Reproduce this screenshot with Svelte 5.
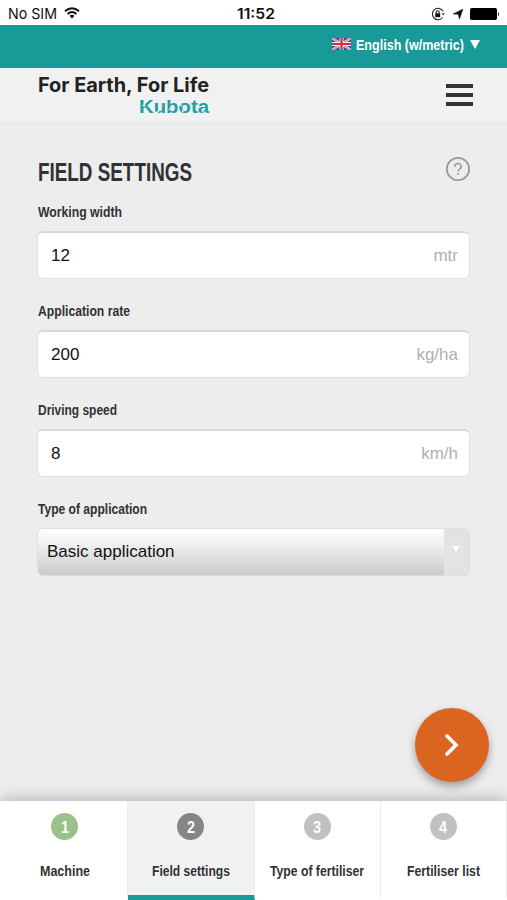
<script>
	let rows = $state([
		{ id: 'width', label: 'Working width', value: '12', unit: 'mtr', size: 84 },
		{ id: 'rate', label: 'Application rate', value: '200', unit: 'kg/ha', size: 92 },
		{ id: 'speed', label: 'Driving speed', value: '8', unit: 'km/h', size: 79 }
	]);
	let current = $state(2);

	const steps = [
		{ nr: 1, label: 'Machine', size: 50 },
		{ nr: 2, label: 'Field settings', size: 78 },
		{ nr: 3, label: 'Type of fertiliser', size: 94 },
		{ nr: 4, label: 'Fertiliser list', size: 73 }
	];

	function next() {
		if (current < steps.length) current += 1;
	}
</script>

<!-- condensed text is fitted to a fixed width -->
{#snippet narrow(text, width, size)}
	<svg class="narrow" {width} height={size + 6} aria-label={text}>
		<text x="0" y={size} font-size={size} textLength={width} lengthAdjust="spacingAndGlyphs">{text}</text>
	</svg>
{/snippet}

<div class="app">
	<div class="status">
		<div class="carrier">
			{@render narrow('No SIM', 49, 15)}
			<svg class="wifi" width="16" height="12" viewBox="0 0 16 12" fill="none" stroke="#111" stroke-width="1.9">
				<path d="M1 4.3Q8-2 15 4.3M3.5 7Q8 3 12.500 7" />
				<path d="M5.500 8.800Q8 6.800 10.500 8.800L8 11.500Z" fill="#111" stroke="none" />
			</svg>
		</div>
		<div class="clock">{@render narrow('11:52', 38, 15)}</div>
		<div class="signals">
			<svg width="14" height="14" viewBox="0 0 14 14" fill="none" stroke="#222" stroke-width="1.1">
				<path d="M12.100 4.300A5.700 5.700 0 1 0 11.600 10.500" />
				<path d="M10.700 6.300h3l-1.500 2.300z" fill="#222" stroke="none" />
				<rect x="4.200" y="6.300" width="5" height="3.900" fill="#111" stroke="none" />
				<path d="M5.200 6.500V5.200a1.500 1.500 0 0 1 3 0v1.300" />
			</svg>
			<svg width="10" height="10" viewBox="0 0 10 10"><path d="M10 0L6.500 10L5.200 5.300L0 5Z" fill="#111" stroke="#111" stroke-width=".5" /></svg>
			<svg class="battery" width="30" height="12" viewBox="0 0 30 12">
				<rect x="0" y="0" width="27" height="12" rx="1.800" fill="#000" />
				<path d="M28 4Q30 6 28 8Z" fill="#000" />
			</svg>
		</div>
	</div>

	<div class="language">
		<svg width="19" height="12" viewBox="0 0 19 12">
			<rect width="19" height="12" fill="#2f4f96" />
			<path d="M0 0L19 12M19 0L0 12" stroke="#e8e4ec" stroke-width="2.400" />
			<path d="M0 0L19 12M19 0L0 12" stroke="#d34561" stroke-width=".8" />
			<path d="M9.500 0V12M0 6H19" stroke="#f0eaf0" stroke-width="4" />
			<path d="M9.500 0V12M0 6H19" stroke="#d82745" stroke-width="2.200" />
		</svg>
		{@render narrow('English (w/metric)', 108, 15)}
		<svg width="10" height="9" viewBox="0 0 10 9"><path d="M0 0H10L5 9Z" fill="#fff" /></svg>
	</div>

	<header>
		<div class="brand">
			<div class="slogan">{@render narrow('For Earth, For Life', 171, 20)}</div>
			<svg class="logo" width="70" height="17" viewBox="0 0 70 17">
				<text x="0" y="15.500" textLength="70" lengthAdjust="spacingAndGlyphs">Kubota</text>
				<path d="M3.500 8.500H6.500M17 17L21 12M30 13L34 9M40 6L43 9M43 15L47 11M63 15L66 11" stroke="#f1f1f1" stroke-width="1.300" />
			</svg>
		</div>
		<button class="menu" aria-label="Menu"><i></i><i></i><i></i></button>
	</header>

	<main>
		<div class="title">
			<h1>{@render narrow('FIELD SETTINGS', 154, 25)}</h1>
			<svg width="26" height="26" viewBox="0 0 26 26" fill="none" stroke="#999">
				<circle cx="13" cy="13" r="11.200" stroke-width="1.700" />
				<path d="M9.800 11V10.500a3.200 3 0 1 1 4.700 2.600Q13 14 13 15.600" stroke-width="1.500" />
				<circle cx="13" cy="18" r="1" fill="#999" stroke="none" />
			</svg>
		</div>

		{#each rows as row}
			<div class="field">
				<label for={row.id}>{@render narrow(row.label, row.size, 14)}</label>
				<div class="box">
					<input id={row.id} bind:value={row.value} />
					<span>{row.unit}</span>
				</div>
			</div>
		{/each}

		<div class="field">
			<span class="label">{@render narrow('Type of application', 109, 14)}</span>
			<button class="select">
				<span>Basic application</span>
				<span class="drop">
					<svg width="10" height="10" viewBox="0 0 10 10"><path d="M1 2H9L5 9.500Z" fill="#ccc" /><path d="M1 1H9L5 8Z" fill="#fff" /></svg>
				</span>
			</button>
		</div>
	</main>

	<button class="next" onclick={next} aria-label="Next">
		<svg width="16" height="24" viewBox="0 0 16 24" fill="none" stroke="#fff" stroke-width="3.700"><path d="M3 3L12 12L3 21" stroke-linecap="round" /></svg>
	</button>

	<nav>
		{#each steps as step}
			<button class="step" class:active={step.nr === current} class:done={step.nr < current} onclick={() => (current = step.nr)}>
				<span class="nr">{@render narrow(String(step.nr), 8, 17)}</span>
				{@render narrow(step.label, step.size, 15)}
			</button>
		{/each}
	</nav>
</div>

<style>
	:global(body) {
		margin: 0;
	}

	.app {
		position: relative;
		display: flex;
		flex-direction: column;
		height: 900px;
		overflow: hidden;
		background: #ededed;
		color: #303234;
		font-family: 'Liberation Sans', Arial, sans-serif;
	}

	button {
		padding: 0;
		border: 0;
		background: none;
		color: inherit;
		font-family: inherit;
	}

	.narrow {
		display: block;
		flex: none;
		overflow: visible;
		fill: currentColor;
		font-weight: bold;
	}

	.status {
		display: grid;
		grid-template-columns: 1fr 38px 1fr;
		align-items: center;
		box-sizing: border-box;
		height: 25px;
		padding: 3px 5px 0 8px;
		background: #fff;
		color: #111;
		font-family: Inter, 'Liberation Sans', sans-serif;
	}

	.carrier {
		display: flex;
		align-items: center;
		gap: 7px;
	}

	.wifi {
		margin-bottom: 2px;
	}

	.carrier .narrow {
		font-weight: 400;
	}

	.clock .narrow {
		margin-left: 1px;
		font-weight: 600;
	}

	.signals {
		display: flex;
		justify-content: flex-end;
		align-items: center;
		gap: 8px;
		padding-bottom: 1px;
	}

	.battery {
		margin: 0 2px 0 -1px;
	}

	.language {
		display: flex;
		justify-content: flex-end;
		align-items: center;
		box-sizing: border-box;
		height: 43px;
		padding: 0 27px 5px 0;
		background: #189a98;
		color: #fff;
	}

	.language .narrow {
		margin: 2px 6px 0 5px;
	}

	header {
		display: flex;
		justify-content: space-between;
		box-sizing: border-box;
		height: 55px;
		padding: 4px 34px 0 38px;
		background: #f1f1f1;
		border-bottom: 1px solid #eaeaea;
	}

	.brand {
		display: flex;
		flex-direction: column;
		align-items: flex-end;
	}

	.slogan {
		color: #222;
		font-family: Inter, 'Liberation Sans', sans-serif;
	}

	.logo {
		margin-top: -1px;
		overflow: visible;
		fill: #1da2a4;
		font: bold 18px 'Liberation Sans', sans-serif;
	}

	.menu {
		display: flex;
		flex-direction: column;
		gap: 5px;
		width: 27px;
		height: 22px;
		margin-top: 12px;
	}

	.menu i {
		width: 27px;
		height: 4px;
		background: #333;
	}

	main {
		padding: 34px 37px 0;
	}

	.title {
		display: flex;
		justify-content: space-between;
		height: 41px;
		padding-left: 1px;
	}

	.title > svg {
		margin: -1px -1px 0 0;
	}

	h1 {
		margin: -1px 0 0;
		font-size: 25px;
	}

	.field {
		height: 99px;
	}

	label,
	.label {
		display: block;
		height: 33px;
		padding: 5px 0 0 1px;
		box-sizing: border-box;
	}

	.box {
		display: flex;
		align-items: center;
		box-sizing: border-box;
		height: 48px;
		padding: 0 11px 0 13px;
		border: 1px solid #dfdfdf;
		border-top: 2px solid #d8d8d8;
		border-radius: 6px;
		background: #fff;
	}

	input {
		flex: 1;
		min-width: 0;
		padding: 0;
		border: 0;
		outline: 0;
		background: none;
		color: #111;
		font: 17px 'Liberation Sans', Arial, sans-serif;
	}

	.box span {
		color: #b0b0b0;
		font-size: 17px;
	}

	.select {
		display: flex;
		justify-content: space-between;
		align-items: center;
		box-sizing: border-box;
		width: 433px;
		height: 48px;
		padding-left: 9px;
		border: 1px solid #dedede;
		border-radius: 6px;
		overflow: hidden;
		background: linear-gradient(#fff, #f2f2f2 30%, #cbcbcb);
		color: #111;
		font-size: 17px;
	}

	.drop {
		display: flex;
		justify-content: center;
		align-items: center;
		width: 25px;
		height: 100%;
		padding: 0 2px 5px 0;
		box-sizing: border-box;
		background: #e3e3e3;
	}

	.next {
		position: absolute;
		right: 18px;
		bottom: 118px;
		display: flex;
		justify-content: center;
		align-items: center;
		width: 74px;
		height: 74px;
		border-radius: 50%;
		background: #db6520;
		box-shadow: 0 4px 9px rgba(0, 0, 0, 0.35);
	}

	nav {
		display: grid;
		grid-template-columns: repeat(4, 1fr);
		height: 99px;
		margin-top: auto;
		padding: 0 0 0 2px;
		background: #fff;
		box-shadow: 0 -2px 14px rgba(0, 0, 0, 0.25);
	}

	.step {
		display: flex;
		flex-direction: column;
		align-items: center;
		box-sizing: border-box;
		padding-top: 12px;
		border-right: 1px solid #eee;
		border-bottom: 4px solid #fff;
	}

	.nr {
		display: flex;
		justify-content: center;
		align-items: center;
		box-sizing: border-box;
		width: 27px;
		height: 27px;
		padding-top: 2px;
		margin-bottom: 21px;
		border-radius: 50%;
		background: #c1c1c1;
		color: #fff;
	}

	.done .nr {
		background: #9bc18a;
	}

	.active {
		background: #f1f1f1;
		border-bottom: 5px solid #189a98;
	}

	.active .nr {
		background: #858585;
	}
</style>
